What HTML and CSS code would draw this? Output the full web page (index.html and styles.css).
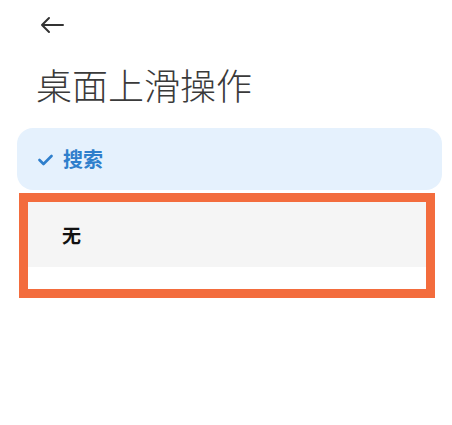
FILE: index.html
```html
<!DOCTYPE html>
<html lang="zh">
<head>
<meta charset="utf-8">
<link rel="stylesheet" href="styles.css">
</head>
<body>
<div class="page">
  <div class="topbar">
    <svg class="back" width="26" height="18" viewBox="0 0 26 18">
      <path d="M24 9H3M10 2L3 9l7 7" fill="none" stroke="#333" stroke-width="2" stroke-linecap="round" stroke-linejoin="round"/>
    </svg>
  </div>
  <h1 class="title">桌面上滑操作</h1>
  <div class="option selected">
    <svg class="check" width="15" height="12" viewBox="0 0 15 12">
      <path d="M1.5 6l4 4 8-8" fill="none" stroke="#2f7fcc" stroke-width="2.6" stroke-linecap="round" stroke-linejoin="round"/>
    </svg>
    <span class="label">搜索</span>
  </div>
  <div class="highlight">
    <div class="row"><span class="row-label">无</span></div>
    <div class="spacer"></div>
  </div>
</div>
</body>
</html>
```
FILE: styles.css
```css
html, body {
  margin: 0;
  padding: 0;
  background: #ffffff;
}
body {
  font-family: "Noto Sans CJK SC", "Noto Sans", sans-serif;
}
.page {
  width: 452px;
  height: 425px;
  overflow: hidden;
}
.topbar {
  height: 66px;
  padding-left: 39px;
  padding-top: 16px;
  box-sizing: border-box;
}
.back {
  display: block;
}
.title {
  margin: 0 0 0 36px;
  font-size: 36px;
  line-height: 36px;
  height: 36px;
  font-weight: 300;
  color: #3a3a3a;
  letter-spacing: 0;
}
.option.selected {
  margin: 26px 10px 0 17px;
  height: 62px;
  border-radius: 16px;
  background: #e5f1fd;
  display: flex;
  align-items: center;
  padding-left: 21px;
  box-sizing: border-box;
}
.check {
  display: block;
  margin-top: 1px;
}
.label {
  margin-left: 10px;
  font-size: 20px;
  line-height: 20px;
  font-weight: 700;
  color: #2f7fcc;
}
.highlight {
  margin: 3px 17px 0 19px;
  border: 9px solid #f36c3d;
  height: 87px;
  background: #ffffff;
}
.row {
  height: 65px;
  background: #f5f5f5;
  display: flex;
  align-items: center;
  padding-left: 34px;
}
.row-label {
  font-size: 19px;
  line-height: 19px;
  font-weight: 700;
  color: #111111;
}
.spacer {
  height: 22px;
}
```
